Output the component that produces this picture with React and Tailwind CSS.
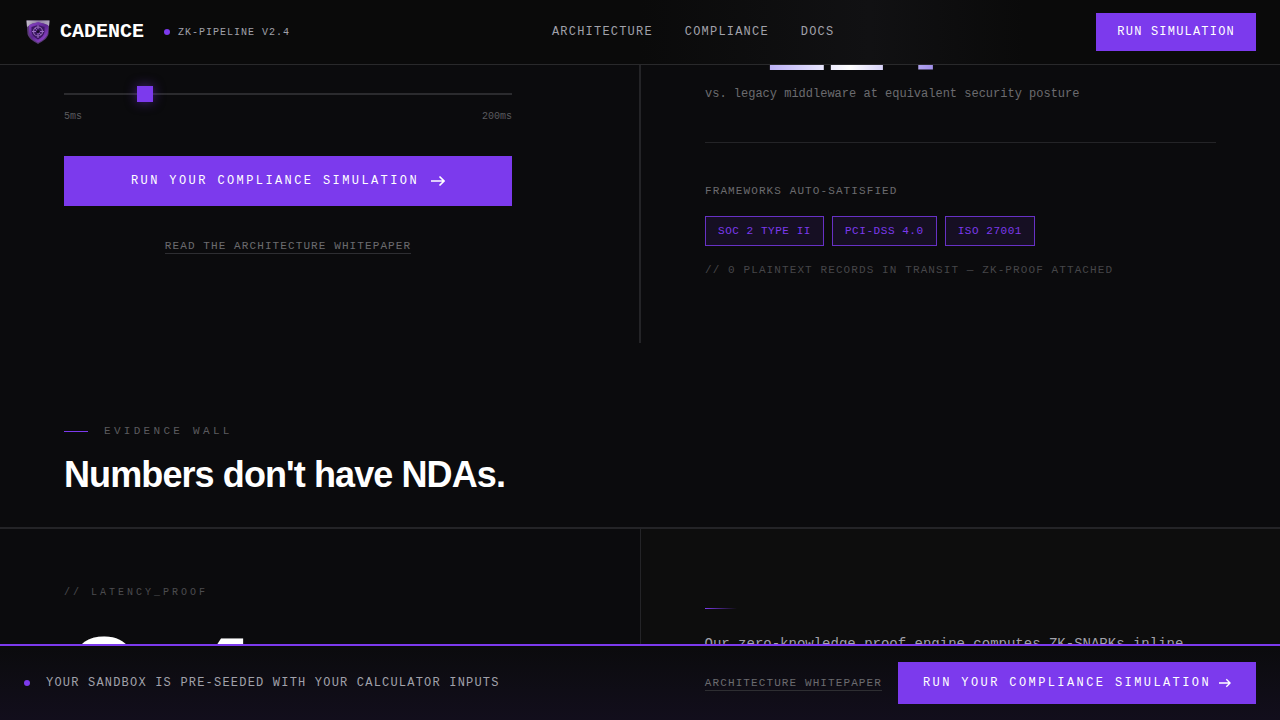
import { useState } from "react";

const navLinks = ["Architecture", "Compliance", "Docs"];
const frameworks = ["SOC 2 TYPE II", "PCI-DSS 4.0", "ISO 27001"];

const Logo = () => (
  <svg className="h-7 w-7" viewBox="0 0 28 28" fill="none" aria-hidden="true">
    <defs>
      <linearGradient id="metal" x1="2" y1="2" x2="26" y2="10" gradientUnits="userSpaceOnUse">
        <stop stopColor="#c9c6ce" />
        <stop offset="0.5" stopColor="#8d7aa3" />
        <stop offset="1" stopColor="#b9b2c4" />
      </linearGradient>
      <linearGradient id="core" x1="6" y1="4" x2="22" y2="24" gradientUnits="userSpaceOnUse">
        <stop stopColor="#8b45c9" />
        <stop offset="0.5" stopColor="#5c2590" />
        <stop offset="1" stopColor="#9b4bd8" />
      </linearGradient>
    </defs>
    <path d="M2.500 2.500H25.500L24.500 16C23.500 20 19.500 23 14 26C8.500 23 4.500 20 3.500 16Z" fill="#5a3a78" />
    <path d="M2.500 2.500H25.500L25 8L20 5.500L14 4.500L8 5.500L3 9Z" fill="url(#metal)" />
    <path d="M14 4L24 7V14C23 19 19 22 14 24.500C9 22 5.500 19 5 14V7Z" fill="url(#core)" />
    <path d="M14 7L20.500 9V14C20 17.500 17.500 19.500 14 21.500C10.500 19.500 8 17.500 7.500 14V9Z" fill="#3c1763" />
    <circle cx="14" cy="13.500" r="4.500" stroke="#8f6cb0" strokeWidth="1.200" />
    <path d="M14 7V11M14 15V20M8 13.500H12M16 13.500H20M11 10L17 17" stroke="#9b6cc8" />
    <circle cx="14" cy="13.500" r="1.500" fill="#160a26" />
  </svg>
);

const Arrow = ({ className }) => (
  <svg className={className} viewBox="0 0 14 14" fill="none" stroke="currentColor" strokeWidth="1.600" aria-hidden="true">
    <path d="M0 7H13M8.500 2.500L13 7L8.500 11.500" />
  </svg>
);

const Header = () => (
  <header className="fixed inset-x-0 top-0 z-20 flex h-[65px] items-center justify-between border-b border-[#29292b] bg-linear-to-r from-[#0a0a0a] from-50% via-[#111113] via-68% to-[#0a0a0a] to-80% px-6">
    <div className="flex items-center gap-5">
      <a href="#top" className="flex items-center gap-2 text-xl leading-7 font-bold text-white">
        <Logo />
        CADENCE
      </a>
      <div className="flex items-center gap-2 text-[10px] tracking-widest text-[#a1a1aa]">
        <span className="h-1.5 w-1.5 rounded-full bg-[#7c3aed]" />
        ZK-PIPELINE V2.4
      </div>
    </div>
    <nav className="flex gap-8 text-xs tracking-widest text-[#a1a1aa] uppercase">
      {navLinks.map((link) => (
        <a key={link} href={`#${link.toLowerCase()}`}>
          {link}
        </a>
      ))}
    </nav>
    <button className="border border-[#7c3aed] bg-[#7c3aed] px-5 py-2.5 text-xs tracking-widest text-white">
      RUN SIMULATION
    </button>
  </header>
);

const WhitepaperLink = ({ children }) => (
  <a
    href="#whitepaper"
    className="border-b border-[#2e2e32] pt-0.5 text-[11px] leading-[13px] tracking-widest text-[#6b6b6f]"
  >
    {children}
  </a>
);

const Calculator = () => {
  const [latency, setLatency] = useState(38);

  return (
    <div className="bg-[#0b0b0d] px-16 pt-[86px] pb-[89px]">
      <div className="max-w-md">
        <input
          type="range"
          min="5"
          max="200"
          value={latency}
          onChange={(e) => setLatency(Number(e.target.value))}
          aria-label="Latency"
          className="block h-4 w-full appearance-none bg-transparent [&::-webkit-slider-runnable-track]:h-0.5 [&::-webkit-slider-runnable-track]:bg-[#2b2b2e] [&::-webkit-slider-thumb]:-mt-[7px] [&::-webkit-slider-thumb]:h-4 [&::-webkit-slider-thumb]:w-4 [&::-webkit-slider-thumb]:appearance-none [&::-webkit-slider-thumb]:bg-[#7c3aed] [&::-webkit-slider-thumb]:shadow-[0_0_12px_rgba(124,58,237,0.5)]"
        />
        <div className="mt-2 flex justify-between text-[10px] leading-[14px] text-[#5b5b5f]">
          <span>5ms</span>
          <span>200ms</span>
        </div>
        <button className="mt-8 flex h-[50px] w-full items-center justify-center gap-3 bg-[#7c3aed] text-xs tracking-[0.2em] text-white">
          RUN YOUR COMPLIANCE SIMULATION
          <Arrow className="h-3.5 w-3.5" />
        </button>
        <div className="mt-8 flex justify-center">
          <WhitepaperLink>READ THE ARCHITECTURE WHITEPAPER</WhitepaperLink>
        </div>
      </div>
    </div>
  );
};

const Results = () => (
  <div className="bg-[#0b0b0d] px-16">
    <p className="w-fit bg-linear-to-r from-[#8b6fe8] via-white via-62% to-[#9b87e8] bg-clip-text pb-5 font-[Liberation_Sans,sans-serif] text-[112px] leading-[64px] font-bold tracking-[-0.04em] text-transparent">
      −214
    </p>
    <p className="text-xs leading-5 text-[#6b6b6f]">
      vs. legacy middleware at equivalent security posture
    </p>
    <div className="mt-[38px] border-t border-[#242427] pt-10">
      <h3 className="text-[11px] leading-4 tracking-widest text-[#6b6b6f]">FRAMEWORKS AUTO-SATISFIED</h3>
      <ul className="mt-[17px] flex flex-wrap gap-2">
        {frameworks.map((name) => (
          <li key={name} className="border border-[#7c3aed]/80 bg-[#7c3aed]/10 px-3 py-1.5 text-[11px] leading-4 tracking-[0.05em] text-[#7c3aed]">
            {name}
          </li>
        ))}
      </ul>
      <p className="mt-4 text-[11px] leading-4 tracking-widest text-[#464649]">
        // 0 PLAINTEXT RECORDS IN TRANSIT — ZK-PROOF ATTACHED
      </p>
    </div>
  </div>
);

const Evidence = () => (
  <section className="pt-20">
    <div className="px-16 pb-8">
      <div className="flex items-center gap-4 text-[11px] leading-4 tracking-[0.3em] text-[#5b5b5f]">
        <span className="h-px w-6 bg-[#7c3aed]" />
        EVIDENCE WALL
      </div>
      <h2 className="mt-4 font-[Liberation_Sans,sans-serif] text-4xl leading-10 font-bold tracking-tight text-white">
        Numbers don't have NDAs.
      </h2>
    </div>
    <div className="grid grid-cols-2 gap-px border-t-2 border-[#242427] bg-[#242427]">
      <div className="bg-[#0b0b0d] px-16 pt-14 pb-16">
        <p className="text-[10px] leading-4 tracking-[0.3em] text-[#4c4c4f]">// LATENCY_PROOF</p>
        <p className="mt-4 font-[Liberation_Sans,sans-serif] text-[144px] leading-[144px] font-bold tracking-tight text-white">
          0.4
        </p>
      </div>
      <div className="bg-[#0d0d0d] px-16 pt-[79px] pb-16">
        <div className="h-px w-8 bg-linear-to-r from-[#7c3aed] to-transparent" />
        <p className="mt-6 text-sm leading-[22px] text-[#a1a1aa]">
          Our zero-knowledge proof engine computes ZK-SNARKs inline
        </p>
      </div>
    </div>
  </section>
);

const StickyBar = () => (
  <div className="fixed inset-x-0 bottom-0 z-20 flex items-center justify-between border-t-2 border-[#7c3aed] bg-linear-to-b from-[#0b0b0d] to-[#120e1c] px-6 py-4">
    <div className="flex items-center gap-4 text-xs tracking-widest text-[#a1a1aa]">
      <span className="h-1.5 w-1.5 rounded-full bg-[#7c3aed]" />
      YOUR SANDBOX IS PRE-SEEDED WITH YOUR CALCULATOR INPUTS
    </div>
    <div className="flex items-center gap-4">
      <WhitepaperLink>ARCHITECTURE WHITEPAPER</WhitepaperLink>
      <button className="flex h-[42px] items-center gap-2 border border-[#7c3aed] bg-[#7c3aed] px-6 text-xs tracking-[0.2em] text-white">
        RUN YOUR COMPLIANCE SIMULATION
        <Arrow className="h-3 w-3" />
      </button>
    </div>
  </div>
);

const App = () => (
  <div id="top" className="h-screen overflow-hidden bg-[#0b0b0d] font-[Liberation_Mono,monospace]">
    <Header />
    <main>
      <section className="grid grid-cols-2 gap-0.5 bg-[#242427]">
        <Calculator />
        <Results />
      </section>
      <Evidence />
    </main>
    <StickyBar />
  </div>
);

export default App;
